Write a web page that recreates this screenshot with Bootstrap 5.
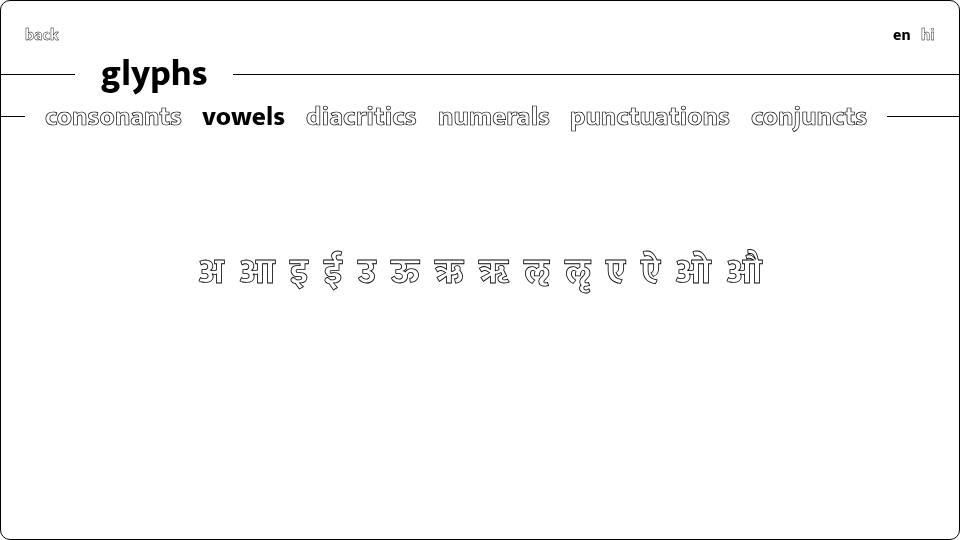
<!DOCTYPE html>
<html lang="en"><head><meta charset="utf-8"><title>glyphs</title>
<link href="https://cdn.jsdelivr.net/npm/bootstrap@5.3.0/dist/css/bootstrap.min.css" rel="stylesheet">
<style>
body{font-family:Mukta,"Ek Mukta","Open Sans","Noto Sans",sans-serif;font-weight:800;color:#000;background:#fff;line-height:1}
.frame{border:1px solid #000;border-radius:10px;height:540px}
a,h1{will-change:transform}
a{color:#000;text-decoration:none;white-space:nowrap}
.outlined{color:transparent;-webkit-text-stroke:.026em #000}
.topbar{padding:0 24px;height:70px;font-size:16px}
.topbar .langs{gap:10.4px}
.rule-line{height:1px;background:#000}
.title-row{height:42px;margin-top:-18px}
.title-row .lead-in{width:74px}
.title-row h1{font-size:36px;font-weight:800;margin:0;padding:0 25.4px;line-height:1}
.tabs{height:42px;font-size:27px}
.tabs .lead-in{width:24px}
.tabs .items{padding:0 20px;gap:20.6px}
.letters{font-size:36px;gap:15.55px;margin-top:115px;height:40px;padding-left:1px}
.letters .outlined{-webkit-text-stroke-width:.023em}
</style></head><body>
<div class="frame overflow-hidden">
<header class="topbar d-flex justify-content-between align-items-center">
<a href="#" class="outlined">back</a>
<div class="langs d-flex"><a href="#">en</a><a href="#" class="outlined">hi</a></div>
</header>
<div class="title-row d-flex align-items-center"><div class="rule-line lead-in"></div><h1>glyphs</h1><div class="rule-line flex-grow-1"></div></div>
<nav class="tabs d-flex align-items-center"><div class="rule-line lead-in"></div>
<div class="items d-flex"><a href="#" class="outlined">consonants</a><a href="#">vowels</a><a href="#" class="outlined">diacritics</a><a href="#" class="outlined">numerals</a><a href="#" class="outlined">punctuations</a><a href="#" class="outlined">conjuncts</a></div>
<div class="rule-line flex-grow-1"></div></nav>
<main class="letters d-flex justify-content-center align-items-center" lang="hi"><a href="#" class="outlined">अ</a><a href="#" class="outlined">आ</a><a href="#" class="outlined">इ</a><a href="#" class="outlined">ई</a><a href="#" class="outlined">उ</a><a href="#" class="outlined">ऊ</a><a href="#" class="outlined">ऋ</a><a href="#" class="outlined">ॠ</a><a href="#" class="outlined">ऌ</a><a href="#" class="outlined">ॡ</a><a href="#" class="outlined">ए</a><a href="#" class="outlined">ऐ</a><a href="#" class="outlined">ओ</a><a href="#" class="outlined">औ</a></main>
</div>
<script src="https://cdn.jsdelivr.net/npm/bootstrap@5.3.0/dist/js/bootstrap.bundle.min.js"></script>
</body></html>
